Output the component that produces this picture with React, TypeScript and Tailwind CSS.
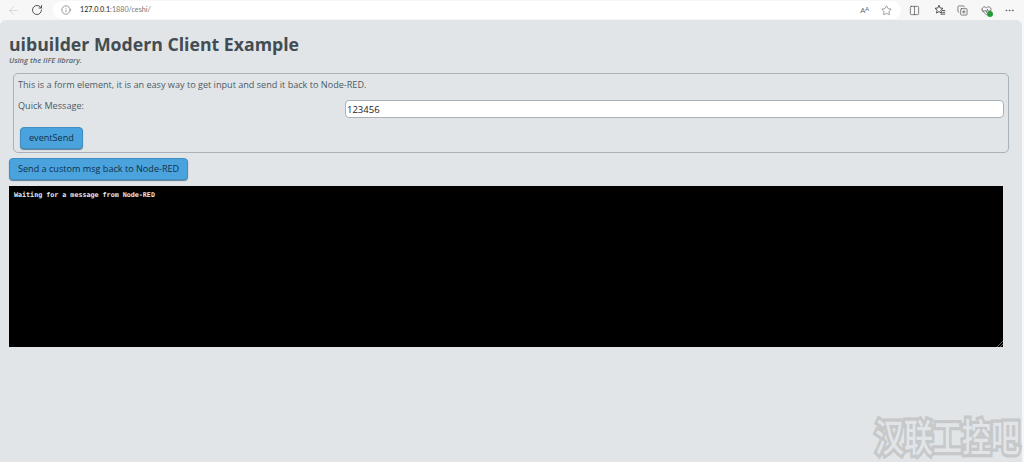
import {
  ArrowLeft,
  Columns2,
  Info,
  RotateCw,
  Star,
  Ellipsis,
  CopyPlus,
  HeartPulse,
} from "lucide-react";

const Toolbar = () => (
  <div className="flex h-[20px] items-center bg-[#f7f7f7] text-[#333]">
    <ArrowLeft size={13} strokeWidth={1.5} className="ml-[7px] text-[#cfcfcf]" />
    <RotateCw size={12} strokeWidth={1.8} className="ml-[11px] text-[#444]" />
    <div className="ml-[10px] flex h-[18px] w-[848px] items-center rounded-full bg-white">
      <Info size={10} strokeWidth={1.4} className="ml-[8px] text-[#555]" />
      <span className="ml-[9px] text-[7.2px] font-medium text-[#333] [font-family:'Lato',sans-serif]">
        127.0.0.1<span className="font-normal text-[#777]">:1880/ceshi/</span>
      </span>
      <span className="ml-auto text-[8px] text-[#666]">Aᴬ</span>
      <Star size={11} strokeWidth={1.2} className="mr-[9px] ml-[12px] text-[#555]" />
    </div>
    <Columns2 size={11} strokeWidth={1.4} className="ml-[8px] text-[#444]" />
    {/* favourites: star with list lines */}
    <svg viewBox="0 0 12 12" fill="none" stroke="currentColor" strokeWidth="0.9" className="ml-[14px] h-[12px] w-[12px] text-[#444]">
      <path d="M5 1.2 6.2 4l2.8.3-2.1 1.9.6 2.9L5 7.6 2.5 9.1l.6-2.9L1 4.3 3.8 4z" />
      <path d="M8 6.5h3.2M8.4 8.3h2.8M6.5 10.1h4.7" />
    </svg>
    <CopyPlus size={11} strokeWidth={1.4} className="ml-[11px] text-[#444]" />
    <div className="relative ml-[13px]">
      <HeartPulse size={11} strokeWidth={1.4} className="text-[#444]" />
      <div className="absolute -right-[1px] -bottom-[1px] h-[6px] w-[6px] rounded-full bg-[#1f9d3a]" />
    </div>
    <Ellipsis size={11} strokeWidth={1.6} className="ml-[12px] text-[#555]" />
  </div>
);

const Button = ({ children }: { children: string }) => (
  <button className="h-[22px] rounded-[4px] border border-[#3f8fc4] bg-[#4aa3dc] px-[8px] text-[9.1px] text-[#12304a] shadow-[0_1px_1px_#5f7f95]">
    {children}
  </button>
);

export default function App() {
  return (
    <div className="relative h-[462px] w-[1024px] overflow-hidden bg-[#f7f7f7] [font-family:'Open_Sans',sans-serif]">
      <Toolbar />
      <main className="h-[442px] w-[1022px] rounded-t-[6px] bg-[#e1e5e8] pt-[13px] pl-[9px] text-[#4d5a62]">
        <h1 className="text-[17.7px] leading-[22px] font-bold text-[#434c52]">
          uibuilder Modern Client Example
        </h1>
        <div className="text-[7.5px] leading-[10px] font-semibold text-[#5c666d] italic">
          Using the IIFE library.
        </div>
        <form className="mt-[8px] ml-[4px] h-[80px] w-[996px] rounded-[5px] border border-[#a9b2b8] px-[4px] pt-[3px]">
          <div className="text-[9.1px] leading-[15px]">
            This is a form element, it is an easy way to get input and send it back to Node-RED.
          </div>
          <div className="mt-[8px] flex">
            <label className="w-[327px] text-[9.1px] leading-[12px]">Quick Message:</label>
            <input
              readOnly
              value="123456"
              className="h-[18px] w-[659px] rounded-[4px] border border-[#a9b2b8] bg-white px-[1px] text-[9.5px] text-[#222]"
            />
          </div>
          <div className="mt-[9px] ml-[2px] flex">
            <Button>eventSend</Button>
          </div>
        </form>
        <div className="mt-[5px] flex">
          <Button>Send a custom msg back to Node-RED</Button>
        </div>
        <pre className="relative mt-[6px] h-[161px] w-[994px] bg-black px-[5px] py-[4px] text-[6.7px] leading-[10px] font-bold text-[#e8eef2] [font-family:'DejaVu_Sans_Mono',monospace]">
          Waiting for a message from Node-RED
          <svg viewBox="0 0 6 6" className="absolute right-0 bottom-0 h-[6px] w-[6px] text-[#777]">
            <path d="M0 6 6 0M3 6 6 3" stroke="currentColor" strokeWidth="0.8" />
          </svg>
        </pre>
      </main>
      <div className="absolute top-[411px] left-[875px] origin-center scale-y-[1.3] text-[29px] leading-[46px] font-medium whitespace-nowrap text-[#e1e5e8] [font-family:'Noto_Sans_CJK_SC',sans-serif] [paint-order:stroke] [-webkit-text-stroke:5px_#c6c8c9]">
        汉联工控吧
      </div>
    </div>
  );
}
